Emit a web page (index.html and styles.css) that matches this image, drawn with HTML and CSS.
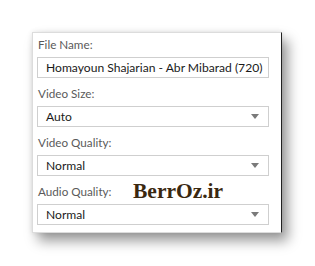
FILE: index.html
```html
<!DOCTYPE html>
<html lang="en">
<head>
    <meta charset="UTF-8">
    <meta name="viewport" content="width=device-width, initial-scale=1.0">
    <title>Download Options</title>
    <link rel="stylesheet" href="styles.css">
</head>
<body>
    <!-- پنل تنظیمات دانلود -->
    <div class="panel">
        <label class="label" for="fileName">File Name:</label>
        <div class="field" id="fileName">Homayoun Shajarian - Abr Mibarad (720)</div>

        <label class="label">Video Size:</label>
        <div class="select"><span>Auto</span><i class="arrow"></i></div>

        <label class="label">Video Quality:</label>
        <div class="select"><span>Normal</span><i class="arrow"></i></div>

        <label class="label">Audio Quality:</label>
        <div class="select"><span>Normal</span><i class="arrow"></i></div>

        <div class="watermark">BerrOz.ir</div>
    </div>
</body>
</html>
```

FILE: styles.css
```css
/* صفحه */
body {
    margin: 0;
    padding: 32px 0 40px 32px;
    background: #ffffff;
    font-family: Lato, "Open Sans", sans-serif;
}

/* پنل */
.panel {
    position: relative;
    width: 232px;
    padding: 2px 12px 7px 4px;
    background: #ffffff;
    border: 1px solid #dcdcdc;
    border-right-color: #222222;
    box-shadow: 6px 8px 12px rgba(0, 0, 0, 0.4), 0 0 5px rgba(0, 0, 0, 0.1);
}

/* برچسب ها */
.label {
    display: block;
    height: 16px;
    line-height: 16px;
    margin: 7px 0 5px 1px;
    font-size: 11.7px;
    color: #5a5a5a;
}

.label:first-child {
    margin-top: 1px;
}

/* فیلد نام فایل و لیست ها */
.field,
.select {
    display: flex;
    align-items: center;
    height: 21px;
    padding: 0 8px;
    border: 1px solid #cfcfcf;
    box-sizing: border-box;
    font-size: 12.1px;
    color: #1a1a1a;
    white-space: nowrap;
}

.select {
    justify-content: space-between;
}

.arrow {
    width: 0;
    height: 0;
    margin-right: 1px;
    border-left: 4px solid transparent;
    border-right: 4px solid transparent;
    border-top: 5px solid #7a7a7a;
}

/* واترمارک */
.watermark {
    position: absolute;
    left: 100px;
    top: 146px;
    font-family: "Liberation Serif", serif;
    font-weight: bold;
    font-size: 21.5px;
    color: #3a2810;
}
```
